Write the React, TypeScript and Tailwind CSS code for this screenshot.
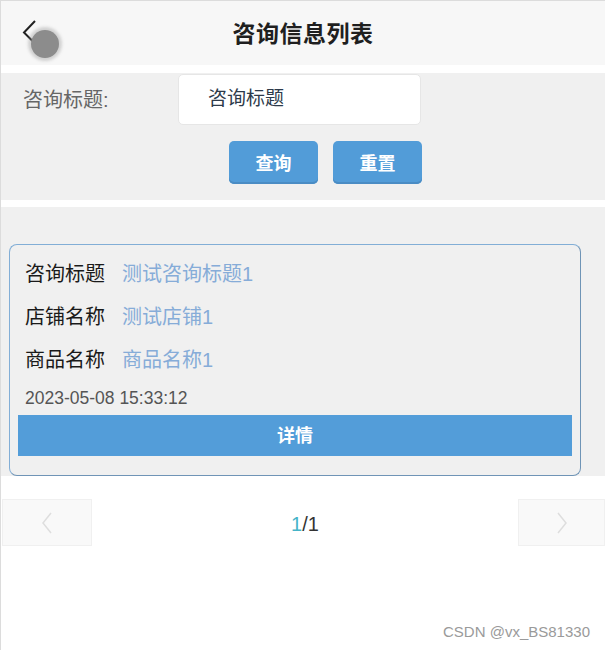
import { FC } from "react";

const font = { fontFamily: '"Liberation Sans", "Noto Sans CJK SC", sans-serif' };

const rows = [
  { label: "咨询标题", value: "测试咨询标题1" },
  { label: "店铺名称", value: "测试店铺1" },
  { label: "商品名称", value: "商品名称1" },
];

const App: FC = () => {
  return (
    <div
      style={font}
      className="relative w-[605px] h-[650px] bg-white border-t border-l border-[#dcdcdc] overflow-hidden"
    >
      {/* header */}
      <div className="relative h-[64px] bg-[#f7f7f7] flex items-center justify-center">
        <button className="absolute left-[20px] top-[18px] w-[40px] h-[44px]" aria-label="返回">
          <svg width="16" height="26" viewBox="0 0 16 26" className="absolute left-0 top-0">
            <path d="M14 2 L3 13.5 L14 24.5" fill="none" stroke="#222" strokeWidth="2" />
          </svg>
          <span className="absolute left-[10px] top-[11px] w-[28px] h-[28px] rounded-full bg-[#8c8c8c] shadow-[0_0_3px_3px_rgba(140,140,140,0.35)]" />
        </button>
        <h1 className="text-[23px] font-bold text-[#1f1f1f] tracking-[0.5px] mt-[2px]">咨询信息列表</h1>
      </div>

      <div className="h-[8px] bg-white" />

      {/* search */}
      <div className="h-[127px] bg-[#f0f0f0] pt-px">
        <div className="flex items-center h-[51px]">
          <span className="w-[177px] pl-[22px] text-[20px] text-[#666]">咨询标题:</span>
          <div className="w-[243px] h-[51px] bg-white rounded-[5px] border border-[#e6e6e6] flex items-center pl-[29px] text-[19px] text-[#2d3a4a]">
            咨询标题
          </div>
        </div>
        <div className="flex gap-[15px] mt-[16px] pl-[228px]">
          <button className="w-[89px] h-[43px] pt-[3px] rounded-[5px] bg-[#529cd8] shadow-[inset_0_-2px_0_#4a8cc4] text-white text-[18px] font-bold">
            查询
          </button>
          <button className="w-[89px] h-[43px] pt-[3px] rounded-[5px] bg-[#529cd8] shadow-[inset_0_-2px_0_#4a8cc4] text-white text-[18px] font-bold">
            重置
          </button>
        </div>
      </div>

      <div className="h-[7px] bg-white" />

      {/* list */}
      <div className="bg-[#f0f0f0] pt-[37px] pl-[8px] pr-[24px]">
        <div className="rounded-[8px] border border-[#82aed6] border-b-[#6f94b6] border-r-[#6f94b6] pt-[7px] pb-[19px] px-[8px]">
          {rows.map((r) => (
            <div key={r.label} className="h-[43px] flex items-center pl-[7px] text-[20px]">
              <span className="text-[#1a1a1a] w-[97px]">{r.label}</span>
              <span className="text-[#86acd8]">{r.value}</span>
            </div>
          ))}
          <div className="h-[34px] flex items-center pl-[7px] text-[17.5px] text-[#555]">
            2023-05-08 15:33:12
          </div>
          <button className="w-full h-[41px] pt-px bg-[#539dd9] text-white text-[18px] font-bold">
            详情
          </button>
        </div>
      </div>

      {/* pagination */}
      <div className="flex items-center justify-between mt-[23px] pl-px">
        <button className="w-[90px] h-[47px] bg-[#f9f9f9] border border-[#f0f0f0] flex items-center justify-center" aria-label="上一页">
          <svg width="12" height="22" viewBox="0 0 12 22">
            <path d="M10 1 L2 11 L10 21" fill="none" stroke="#dedede" strokeWidth="1.5" />
          </svg>
        </button>
        <div className="text-[20px] text-[#333] mt-[2px]">
          <span className="text-[#45b4c8]">1</span>/1
        </div>
        <button className="w-[87px] h-[47px] bg-[#f9f9f9] border border-[#f0f0f0] flex items-center justify-center" aria-label="下一页">
          <svg width="12" height="22" viewBox="0 0 12 22">
            <path d="M2 1 L10 11 L2 21" fill="none" stroke="#dedede" strokeWidth="1.5" />
          </svg>
        </button>
      </div>

      <div className="absolute right-[15px] bottom-[7px] text-[15px] text-[#9a9a9a]">
        CSDN @vx_BS81330
      </div>
    </div>
  );
};

export default App;
